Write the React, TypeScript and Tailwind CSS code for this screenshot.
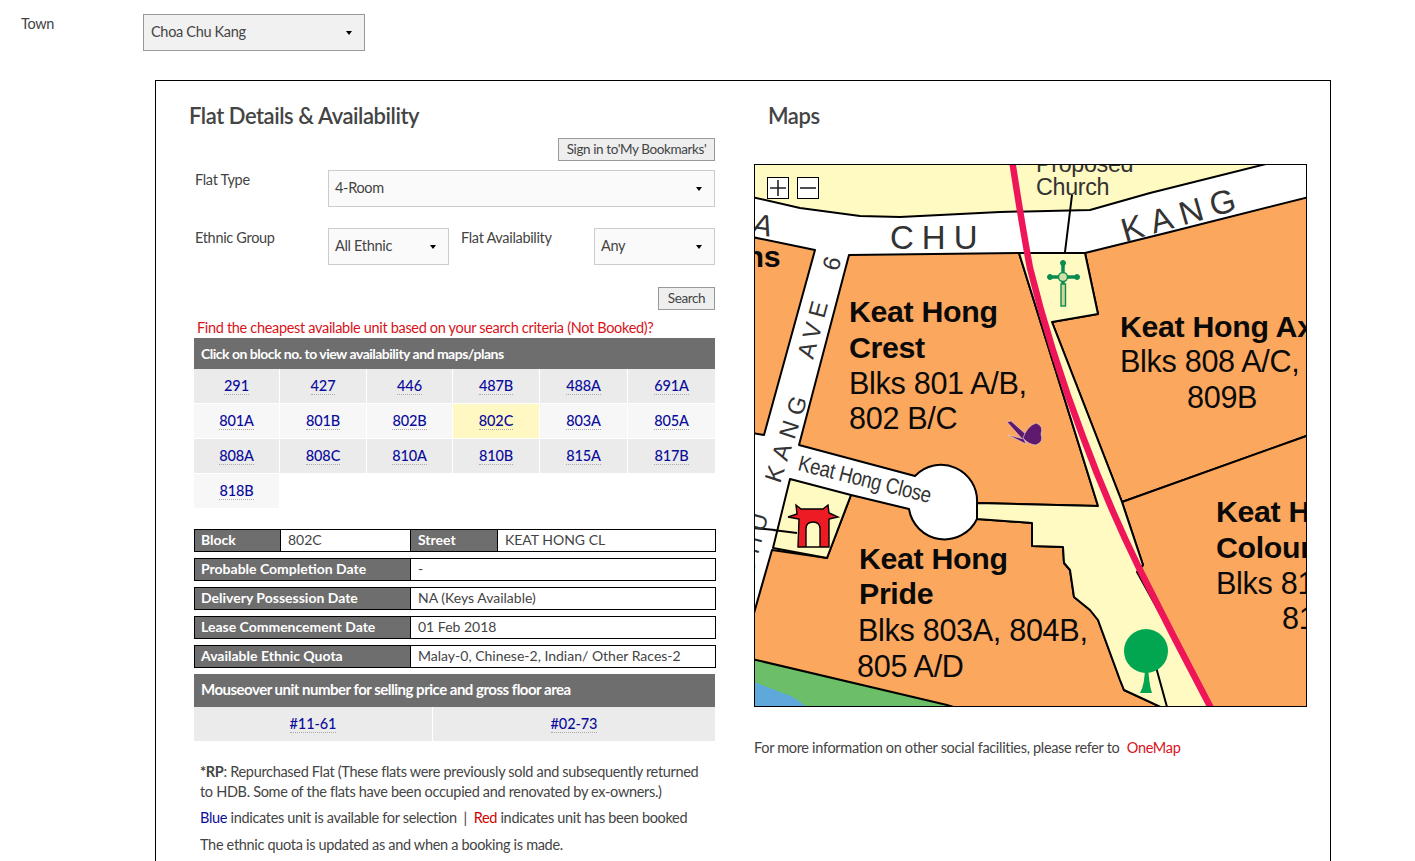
const font = "font-['Lato','Liberation_Sans',sans-serif]";

const blocks = [
  '291', '427', '446', '487B', '488A', '691A',
  '801A', '801B', '802B', '802C', '803A', '805A',
  '808A', '808C', '810A', '810B', '815A', '817B',
  '818B',
];

const details = [
  ['Probable Completion Date', '-'],
  ['Delivery Possession Date', 'NA (Keys Available)'],
  ['Lease Commencement Date', '01 Feb 2018'],
  ['Available Ethnic Quota', 'Malay-0, Chinese-2, Indian/ Other Races-2'],
];

function Caret() {
  return <span className="w-0 h-0 border-x-[3.5px] border-x-transparent border-t-[4px] border-t-black" />;
}

function Select({ label, className }: { label: string; className: string }) {
  return (
    <div className={`flex items-center justify-between pl-[6px] pr-[12px] border border-[#ccc] bg-[#fafafa] text-[#444] ${className}`}>
      <span className="-mt-[2px]">{label}</span>
      <Caret />
    </div>
  );
}

function BlockLink({ children }: { children: string }) {
  return <span className="text-[14.5px] tracking-[-0.1px] leading-[17px] font-medium text-[#0b0b9c] border-b border-dotted border-[#aaa]">{children}</span>;
}

function MapLabels() {
  const sans = 'Liberation Sans, Arial, sans-serif';
  return (
    <g fontFamily={sans} fontSize="30.6" fill="#0a0a0a">
      <g fontWeight="700" fontSize="30.3">
        <text x="849" y="322">Keat Hong</text>
        <text x="849" y="358">Crest</text>
        <text x="1120" y="337">Keat Hong Axis</text>
        <text x="859" y="569">Keat Hong</text>
        <text x="859" y="604">Pride</text>
        <text x="1216" y="522">Keat Hong</text>
        <text x="1216" y="558">Colours</text>
        <text x="745.5" y="267">ns</text>
      </g>
      <text x="849" y="394">Blks 801 A/B,</text>
      <text x="849" y="429">802 B/C</text>
      <text x="1120" y="372">Blks 808 A/C,</text>
      <text x="1187" y="408">809B</text>
      <text x="858" y="641">Blks 803A, 804B,</text>
      <text x="857" y="677">805 A/D</text>
      <text x="1216" y="594">Blks 815A,</text>
      <text x="1282" y="629">815</text>
      <g fill="#333">
        <text x="1036" y="172" fontSize="23.3">Proposed</text>
        <text x="1036" y="195" fontSize="23.3">Church</text>
        <text x="890" y="249" fontSize="33" letterSpacing="8">CHU</text>
        <text transform="translate(1125 242) rotate(-16)" fontSize="33" letterSpacing="8">KANG</text>
        <text transform="translate(813 360) rotate(-75)" fontSize="24" letterSpacing="6">AVE</text>
        <text transform="translate(838 272) rotate(-75)" fontSize="24">6</text>
        <text transform="translate(780 484) rotate(-72)" fontSize="24" letterSpacing="7">KANG</text>
        <text transform="translate(770 510) rotate(-75)" fontSize="24" letterSpacing="6" textAnchor="end">CHU</text>
        <text transform="translate(751 234) rotate(8)" fontSize="30" fontStyle="italic">A</text>
        <text transform="translate(797 470) rotate(14)" fontSize="22" textLength="136" lengthAdjust="spacingAndGlyphs">Keat Hong Close</text>
      </g>
    </g>
  );
}

// site plan, coordinates follow the page so they are easy to compare
function SitePlan() {
  return (
    <svg viewBox="755 165 551 541" className="block w-full h-full">
      <rect x="754" y="164" width="553" height="543" fill="#fff" />
      <g stroke="#000" strokeWidth="2" strokeLinejoin="round">
        <path fill="#fff9c2" d="M752 197 L800 208 L860 216 L900 217 L1000 212 L1090 210 L1150 193 L1270 163 L752 163 Z" />
        <path fill="#fba75e" d="M752 237 L815 250 L764 435 L752 433 Z" />
        <path fill="#fba75e" d="M849 255 L1019 253 L1098 506 L977 503 A36 36 0 0 0 915 476 L799 445 Z" />
        <path fill="#fba75e" d="M1085 253 L1170 232 L1309 197 L1309 435 L1122 502 L1052 322 L1098 314 Z" />
        <path fill="#fba75e" d="M1122 502 L1309 435 L1309 709 L1213 709 L1137 572 L1143 565 Z" />
        <path fill="#fba75e" d="M752 620 L772 550 L827 558 L851 495 L909 509 A36 36 0 0 0 977 519 L1032 523 L1032 546 L1063 547 L1064 563 L1070 570 L1074 597 L1090 610 L1098 620 L1120 680 L1124 690 L1165 709 L752 709 Z" />
        <path fill="#fff9c2" d="M1019 253 L1085 253 L1098 314 L1052 322 L1122 502 L1143 565 L1137 572 L1213 709 L1165 709 L1124 690 L1120 680 L1098 620 L1090 610 L1074 597 L1070 570 L1064 563 L1063 547 L1032 546 L1032 523 L977 519 L977 503 L1098 506 Z" />
        <path fill="#fff9c2" d="M790 479 L851 495 L827 558 L773 548 Z" />
        <path fill="#6cbe68" d="M752 659 L947 705 L960 709 L752 709 Z" />
        <path fill="#5fa8dc" stroke="none" d="M752 681 L793 697 L810 709 L752 709 Z" />
        <path fill="none" d="M773 530 L797 533 M752 528 L775 530" />
      </g>
      <path d="M1012 160 Q1022 225 1030 268 Q1050 350 1083 437 Q1108 505 1140 570 Q1175 640 1212 710" fill="none" stroke="#ee1559" strokeWidth="6.5" />
      <path d="M1072 195 L1065 252 M1156 667 L1167 707" stroke="#000" strokeWidth="2" />

      {/* church cross */}
      <g fill="#0a8c50" stroke="#0a8c50">
        <path d="M1063 261 V285 M1050 277 H1077" strokeWidth="3.5" fill="none" />
        <rect x="1061" y="284" width="4.5" height="22" fill="#d5d59a" strokeWidth="1.4" />
        <circle cx="1063" cy="263" r="2.5" />
        <circle cx="1050" cy="277" r="2.5" />
        <circle cx="1077" cy="277" r="2.5" />
        <circle cx="1063" cy="277" r="4.5" fill="#cfe0a8" strokeWidth="1.4" />
      </g>

      {/* tree */}
      <circle cx="1146" cy="651" r="22" fill="#03a650" />
      <path d="M1140 693 Q1145 685 1145 665 L1148 665 Q1149 685 1152 693 Z" fill="#03a650" />

      {/* butterfly */}
      <g fill="#5f1a6e" stroke="#e6d8e8" strokeWidth="0.6">
        <path d="M1007 422 L1011 421 L1028 436 L1024 441 Z" />
        <path d="M1008 435 L1024 439 L1026 444 Z" />
        <path d="M1023 438 Q1027 426 1036 423 Q1044 426 1041 434 Q1044 442 1036 445 Q1029 445 1023 438 Z" />
      </g>

      {/* gate */}
      <path
        d="M788 517 L797 514 L796 505 L801 509 L823 509 L828 505 L829 513 L838 517 L829 519 L829 547 L798 547 L799 519 Z M806 547 L820 547 L820 529 Q820 522 813 522 Q806 522 806 529 Z"
        fill="#ed1c24"
        fillRule="evenodd"
        stroke="#000"
        strokeWidth="1.4"
      />

      <MapLabels />
    </svg>
  );
}

function ZoomButton({ plus }: { plus?: boolean }) {
  return (
    <span className="w-[22px] h-[22px] border border-black bg-white flex items-center justify-center">
      <svg viewBox="0 0 20 20" className="w-5 h-5">
        <path d={plus ? 'M2 10 H18 M10 2 V18' : 'M2 10 H18'} stroke="#222" strokeWidth="1.6" />
      </svg>
    </span>
  );
}

export default function App() {
  return (
    <div className={`${font} h-[861px] overflow-hidden bg-white text-[#444] text-[14.5px] tracking-[-0.32px]`}>
      <div className="flex pt-[14px] pl-[21px] h-[80px]">
        <span className="w-[122px] leading-[20px]">Town</span>
        <div className="w-[222px] h-[37px] flex items-center justify-between pl-[7px] pr-[12px] border border-[#999] bg-[#f1f1f1]">
          <span className="-mt-[2px]">Choa Chu Kang</span>
          <Caret />
        </div>
      </div>

      <div className="ml-[155px] w-[1176px] h-[900px] border border-black flex">
        <div className="w-[560px] pl-[33px] pt-[21px]">
          <h2 className="text-[22px] tracking-[-0.45px] leading-[28px] font-semibold text-[#444]">Flat Details &amp; Availability</h2>

          <div className="ml-[5px] w-[521px]">
            <div className="flex justify-end mt-[8px]">
              <button className="h-[23px] w-[157px] pt-[1px] border border-[#999] bg-[#eee] text-[13.5px] tracking-[-0.4px] leading-none text-[#444]">Sign in to'My Bookmarks'</button>
            </div>

            <div className="flex mt-[9px]">
              <span className="w-[134px] pl-[1px] leading-[20px]">Flat Type</span>
              <Select label="4-Room" className="w-[387px] h-[37px]" />
            </div>

            <div className="flex mt-[21px]">
              <span className="w-[134px] pl-[1px] leading-[20px]">Ethnic Group</span>
              <Select label="All Ethnic" className="w-[121px] h-[37px]" />
              <span className="w-[145px] pl-[12px] leading-[20px]">Flat Availability</span>
              <Select label="Any" className="w-[121px] h-[37px]" />
            </div>

            <div className="flex justify-end mt-[22px]">
              <button className="h-[23px] w-[57px] border border-[#999] bg-[#eee] text-[13.5px] tracking-[-0.4px] leading-none text-[#444]">Search</button>
            </div>

            <p className="mt-[8px] pl-[3px] leading-[20px] text-[#d8131b]">Find the cheapest available unit based on your search criteria (Not Booked)?</p>

            <div className="h-[31px] pl-[7px] pb-[1px] flex items-center bg-[#6e6e6e] text-white text-[14px] tracking-[-0.5px] font-bold">Click on block no. to view availability and maps/plans</div>

            <div className="grid grid-cols-[85px_86px_85px_86px_87px_87px] gap-px">
              {blocks.map((b, i) => {
                const odd = Math.floor(i / 6) % 2 === 0;
                return (
                  <div key={b} className={`h-[34px] flex items-center justify-center ${b === '802C' ? 'bg-[#fff8c2]' : odd ? 'bg-[#ebebeb]' : 'bg-[#f7f7f7]'}`}>
                    <BlockLink>{b}</BlockLink>
                  </div>
                );
              })}
            </div>

            <div className="mt-[21px] flex flex-col gap-[6px] text-[14px] tracking-normal w-[522px]">
              <div className="flex h-[23px] border border-black leading-[20px]">
                <span className="w-[86px] pl-[6px] bg-[#6e6e6e] text-white font-bold border-r border-black">Block</span>
                <span className="w-[130px] pl-[7px] border-r border-black">802C</span>
                <span className="w-[87px] pl-[7px] bg-[#6e6e6e] text-white font-bold border-r border-black">Street</span>
                <span className="pl-[7px]">KEAT HONG CL</span>
              </div>
              {details.map(([k, v]) => (
                <div key={k} className="flex h-[23px] border border-black leading-[20px]">
                  <span className="w-[216px] pl-[6px] bg-[#6e6e6e] text-white font-bold border-r border-black">{k}</span>
                  <span className="pl-[7px]">{v}</span>
                </div>
              ))}
            </div>

            <div className="mt-[6px] h-[33px] pl-[7px] pb-[2px] flex items-center bg-[#6e6e6e] text-white text-[15px] tracking-[-0.5px] font-bold">Mouseover unit number for selling price and gross floor area</div>
            <div className="flex gap-px">
              <div className="w-[238px] h-[34px] flex items-center justify-center bg-[#ebebeb]"><BlockLink>#11-61</BlockLink></div>
              <div className="flex-1 h-[34px] flex items-center justify-center bg-[#ebebeb]"><BlockLink>#02-73</BlockLink></div>
            </div>

            <div className="mt-[21px] pl-[6px] leading-[20px] whitespace-nowrap">
              <p>
                <b>*RP</b>: Repurchased Flat (These flats were previously sold and subsequently returned
                <br />
                to HDB. Some of the flats have been occupied and renovated by ex-owners.)
              </p>
              <p className="mt-[6px]">
                <span className="text-[#0b0b9c]">Blue</span> indicates unit is available for selection &nbsp;|&nbsp; <span className="text-[#d00000]">Red</span> indicates unit has been booked
              </p>
              <p className="mt-[7px]">The ethnic quota is updated as and when a booking is made.</p>
            </div>
          </div>
        </div>

        <div className="pl-[38px] pt-[21px]">
          <h2 className="pl-[14px] text-[22px] tracking-[-0.45px] leading-[28px] font-semibold text-[#444]">Maps</h2>
          <div className="relative mt-[34px] w-[551px] h-[541px] border border-black box-content">
            <SitePlan />
            <div className="absolute left-[12px] top-[12px] flex gap-[8px]">
              <ZoomButton plus />
              <ZoomButton />
            </div>
          </div>
          <p className="mt-[31px] leading-[20px]">
            For more information on other social facilities, please refer to <span className="ml-1 text-[#d8131b]">OneMap</span>
          </p>
        </div>
      </div>
    </div>
  );
}
